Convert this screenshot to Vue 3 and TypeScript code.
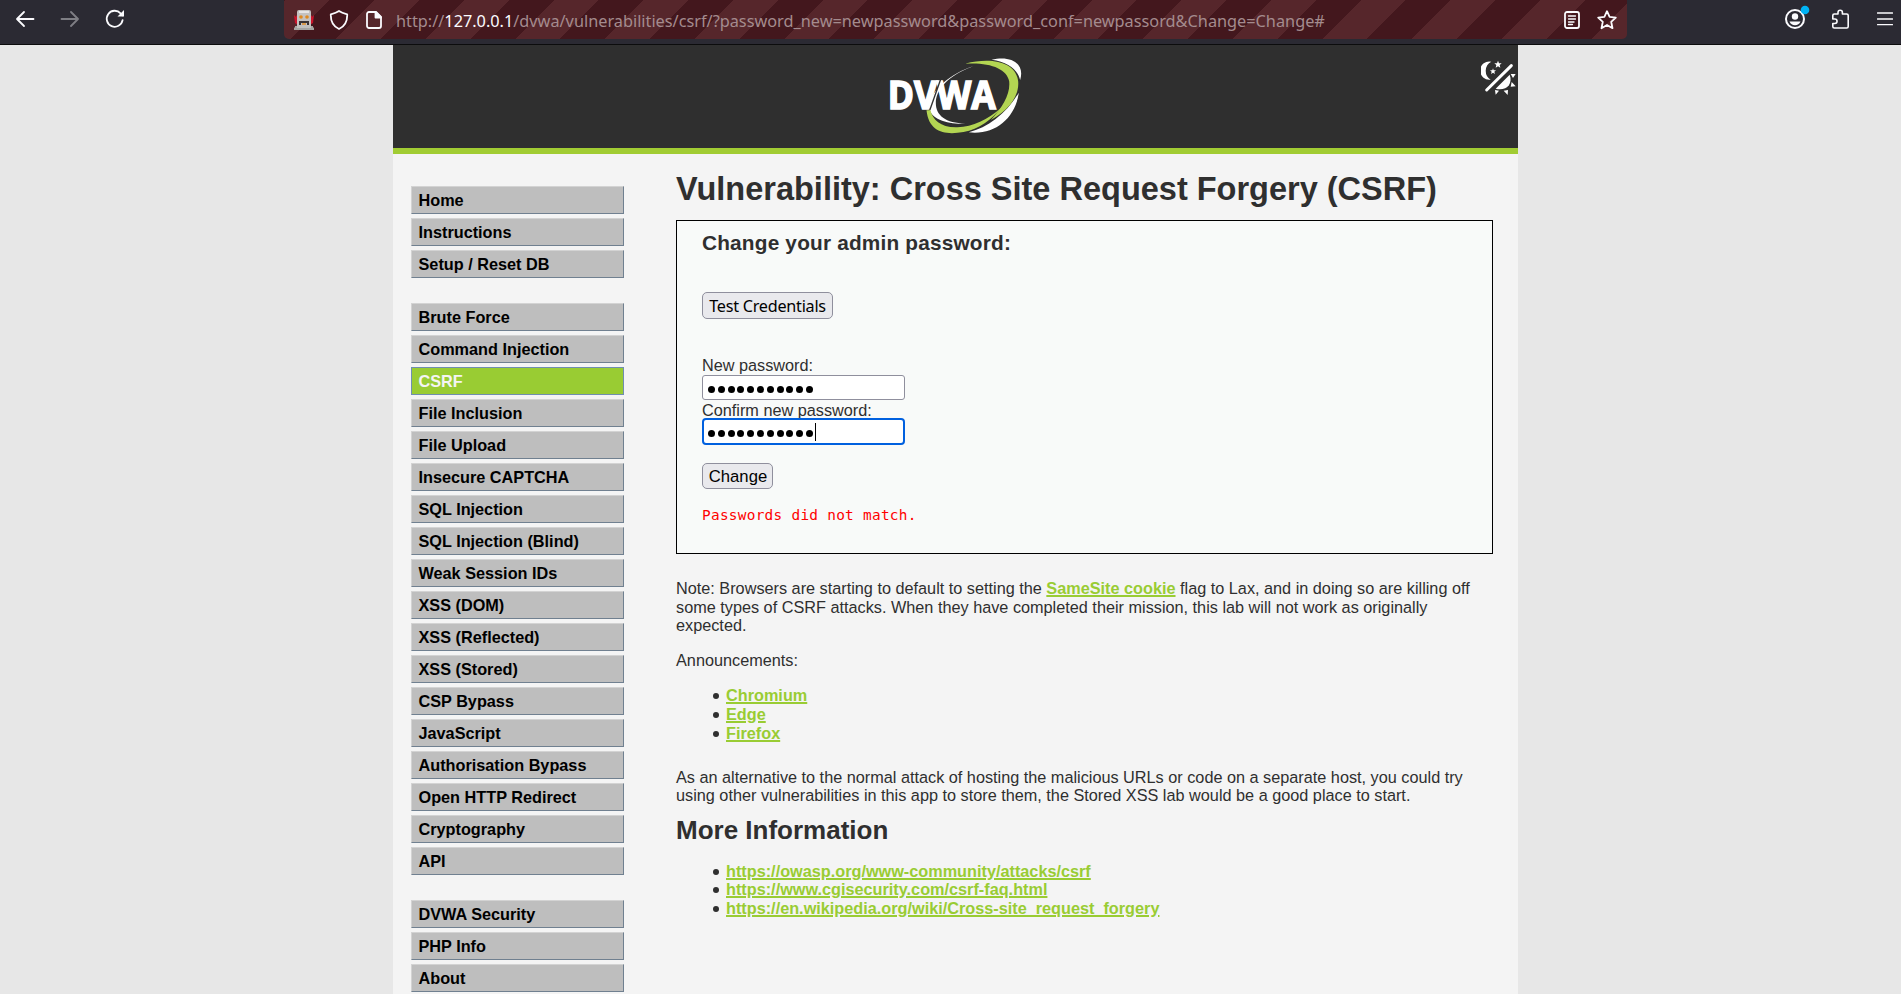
<script setup lang="ts">
interface NavGroup { items: string[] }

const groups: NavGroup[] = [
  { items: ['Home', 'Instructions', 'Setup / Reset DB'] },
  {
    items: [
      'Brute Force', 'Command Injection', 'CSRF', 'File Inclusion', 'File Upload',
      'Insecure CAPTCHA', 'SQL Injection', 'SQL Injection (Blind)', 'Weak Session IDs',
      'XSS (DOM)', 'XSS (Reflected)', 'XSS (Stored)', 'CSP Bypass', 'JavaScript',
      'Authorisation Bypass', 'Open HTTP Redirect', 'Cryptography', 'API',
    ],
  },
  { items: ['DVWA Security', 'PHP Info', 'About'] },
]
const current = 'CSRF'
const announcements: string[] = ['Chromium', 'Edge', 'Firefox']
const references: string[] = [
  'https://owasp.org/www-community/attacks/csrf',
  'https://www.cgisecurity.com/csrf-faq.html',
  'https://en.wikipedia.org/wiki/Cross-site_request_forgery',
]
const passwordLength = 11
</script>

<template>
  <div class="screen">
    <header class="toolbar">
      <div class="nav-buttons">
        <svg width="20" height="20" viewBox="0 0 20 20" class="line"><path d="M18.5 10H2.5M9 3 2 10l7 7" /></svg>
        <svg width="20" height="20" viewBox="0 0 20 20" class="line dim"><path d="M1.5 10h16M11 3l7 7-7 7" /></svg>
        <svg width="20" height="20" viewBox="0 0 20 20" class="line">
          <path d="M17.6 11.2a8 8 0 1 1-2-6.9l2 2" /><path d="M19 1v6.5h-6.500z" fill="#fbfbfe" stroke="none" />
        </svg>
      </div>
      <div class="urlbar">
        <svg class="robot" width="20" height="20" viewBox="0 0 20 20">
          <path d="M0 5l2 2v-2l2 3v7l-3-2zM20 5l-2 2v-2l-2 3v7l3-2z" fill="#c9142b" />
          <path d="M3 2q0-2 2-2h10q2 0 2 2v14H3z" fill="#c4c2c0" />
          <path d="M5 1h10v2H5z" fill="#e6e5e4" />
          <circle cx="7" cy="7" r="1.800" fill="#e08a1e" /><circle cx="13" cy="7" r="1.800" fill="#e08a1e" />
          <path d="M5 11h10v4h-2v-2H7v2H5z" fill="#3a3434" /><path d="M8 13h4v2H8z" fill="#d89a4a" />
          <path d="M1 16h18v1.500h1V20H0v-2.500h1z" fill="#a5a5a2" /><path d="M3 16.500h14v1H3z" fill="#dcdcd8" />
        </svg>
        <svg class="line shield" width="20" height="20" viewBox="0 0 20 20"><path d="M10 1c2.500 1.800 5 2.500 8.200 3.300C18.400 10 16.500 16 10 19 3.500 16 1.600 10 1.800 4.300 5 3.500 7.500 2.800 10 1z" /></svg>
        <svg class="line doc" width="16" height="18" viewBox="0 0 16 18"><path d="M3 1h7l5 5v9a2 2 0 0 1-2 2H3a2 2 0 0 1-2-2V3a2 2 0 0 1 2-2z" /><path d="M9.500 1v5.500H15z" fill="#fbfbfe" /></svg>
        <span class="url">http://<b>127.0.0.1</b>/dvwa/vulnerabilities/csrf/?password_new=newpassword&amp;password_conf=newpassord&amp;Change=Change#</span>
        <svg class="line reader" width="16" height="18" viewBox="0 0 16 18"><rect x="1" y="1" width="14" height="16" rx="2" /><path d="M4.500 5h7M4.500 8h7M4.500 11h5.500M4.500 13.500h4" stroke-width="1.300" /></svg>
        <svg class="line star" width="20" height="20" viewBox="0 0 20 20"><path d="M10 1.200l2.600 5.700 6.200.7-4.600 4.200 1.300 6.400-5.500-3.200-5.500 3.200 1.300-6.400L1.200 7.600l6.200-.7z" /></svg>
      </div>
      <div class="tools">
        <svg width="26" height="26" viewBox="0 0 26 26">
          <circle cx="11" cy="15" r="9" fill="none" stroke="#fbfbfe" stroke-width="2" />
          <circle cx="11" cy="12.500" r="3.200" fill="#fbfbfe" /><path d="M5.500 17.500h11c-1 2.500-3 3.700-5.500 3.700s-4.500-1.200-5.500-3.700z" fill="#fbfbfe" />
          <circle cx="21" cy="6" r="4.300" fill="#00b3f4" />
        </svg>
        <svg class="line puzzle" width="20" height="20" viewBox="0 0 20 20"><path d="M1.800 6.500q0-1.500 1.500-1.500H7V3.500a2.200 2.200 0 0 1 4.400 0V5h4.300q1.500 0 1.500 1.500v11q0 1.500-1.500 1.500H3.300q-1.500 0-1.500-1.500v-3h2a2 2 0 0 0 0-4.500h-2z" stroke-width="1.600" /></svg>
        <svg class="line menu" width="16" height="14" viewBox="0 0 16 14"><path d="M.5 1h15M.5 7h15M.5 12.700h15" stroke-width="1.300" /></svg>
      </div>
    </header>

    <div class="container">
      <div class="banner">
        <svg width="140" height="80" viewBox="76.500 45 420 240">
          <path d="M396 59C455 45 497 70 482 120C474 88 446 66 396 59Z" fill="#fff" />
          <path d="M478 158C467 236 405 286 328 277C385 262 440 222 478 158Z" fill="#fff" />
          <path d="M342 79C275 98 208 155 209 203C212 238 268 254 318 251C258 250 229 226 229 190C229 150 262 108 342 79Z" fill="#fff" />
          <path d="M317 71C400 50 470 68 476 124C480 168 447 212 394 240C430 200 453 162 449 124C443 86 390 66 317 71Z" fill="#b3d552" />
          <path d="M201 211C208 278 258 286 312 276C358 268 398 238 425 203C385 238 340 260 294 262C245 264 219 240 213 211Z" fill="#b3d552" />
          <text x="85" y="208" textLength="324" lengthAdjust="spacingAndGlyphs" class="logo-text">DVWA</text>
          <path d="M243 119L211 210" stroke="#2f2f2f" stroke-width="4" />
        </svg>
        <svg class="theme" width="35" height="35" viewBox="120 60 105 105">
          <path d="M151 65A27.500 27.500 0 1 0 149 119A31 31 0 0 1 151 65Z" fill="#fff" />
          <path d="M171 62l3 8h8l-6 5 2 8-7-4-7 4 2-8-6-5h8zM156 85l2 6h7l-5 4 2 7-6-4-6 4 2-7-5-4h7z" fill="#fff" />
          <path d="M137 150L211 77" stroke="#fff" stroke-width="9" stroke-linecap="round" />
          <path d="M206 104C217 133 194 154 164 146Z" fill="#fff" />
          <path d="M209 102h15l-8 12zM212 126l12 13-15 1zM188 152l13-2-1 15zM162 150l12 2-10 12z" fill="#fff" />
        </svg>
      </div>

      <div class="body">
        <nav class="menu-col">
          <ul v-for="(group, i) in groups" :key="i">
            <li v-for="item in group.items" :key="item" :class="{ selected: item === current }">{{ item }}</li>
          </ul>
        </nav>

        <main>
          <h1>Vulnerability: Cross Site Request Forgery (CSRF)</h1>
          <section class="panel">
            <h3>Change your admin password:</h3>
            <button class="test" type="button">Test Credentials</button>
            <label>New password:</label>
            <div class="field"><i v-for="n in passwordLength" :key="n" /></div>
            <label class="second">Confirm new password:</label>
            <div class="field focus"><i v-for="n in passwordLength" :key="n" /><em /></div>
            <button class="change" type="button">Change</button>
            <pre>Passwords did not match.</pre>
          </section>
          <p class="note">Note: Browsers are starting to default to setting the <a>SameSite cookie</a> flag to Lax, and in doing so are killing off<br>some types of CSRF attacks. When they have completed their mission, this lab will not work as originally<br>expected.</p>
          <p class="ann">Announcements:</p>
          <ul class="links"><li v-for="a in announcements" :key="a"><a>{{ a }}</a></li></ul>
          <p class="alt">As an alternative to the normal attack of hosting the malicious URLs or code on a separate host, you could try<br>using other vulnerabilities in this app to store them, the Stored XSS lab would be a good place to start.</p>
          <h2>More Information</h2>
          <ul class="links refs"><li v-for="r in references" :key="r"><a>{{ r }}</a></li></ul>
        </main>
      </div>
    </div>
  </div>
</template>

<style>
body { margin: 0; overflow: hidden; }
</style>

<style scoped>
* { box-sizing: border-box; }
.screen { width: 1901px; height: 994px; overflow: hidden; background: #e7e7e7; font-family: "Liberation Sans", Arial, sans-serif; font-size: 16.25px; line-height: 18.75px; color: #2f2f2f; white-space: nowrap; }
.toolbar { height: 45px; background: #2b2a33; border-bottom: 1px solid #0c0c0d; display: flex; align-items: flex-start; }
svg { display: block; flex: none; }
.line { fill: none; stroke: #fbfbfe; stroke-width: 1.8; stroke-linecap: round; stroke-linejoin: round; }
.dim { opacity: .4; }
.nav-buttons { width: 284px; display: flex; gap: 25px; padding: 9px 0 0 15px; }
.urlbar { width: 1343px; height: 39px; border-radius: 0 0 5px 5px; display: flex; align-items: center; padding-left: 10px; background: repeating-linear-gradient(135deg, #43171d 0, #43171d .8px, #56262b .8px, #56262b 32.5px, #43171d 32.5px, #43171d 63.4px); }
.shield { margin-left: 15px; }
.doc { margin-left: 17px; }
.url { margin-left: 14px; width: 1168px; margin-top: 2px; font: 16.300px/24px "Noto Sans", "Open Sans", sans-serif; color: #a48b8e; }
.url b { font-weight: 400; color: #fbfbfe; }
.star { margin-left: 17px; }
.tools { display: flex; padding: 4px 0 0 157px; }
.puzzle { margin: 5px 0 0 21px; }
.menu { margin: 8px 0 0 26px; }

.container { width: 1125px; margin: 0 auto 0 393px; background: #f4f4f4; height: 949px; }
.banner { height: 109px; background: #2f2f2f; border-bottom: 6px solid #a1cc33; display: flex; padding: 10px 0 0 491.500px; }
.logo-text { font: 700 120px "Open Sans", sans-serif; fill: #fff; stroke: #fff; stroke-width: 5px; }
.theme { margin: 5px 0 0 456.500px; }
.body { display: flex; }
.menu-col { width: 213px; margin: 32px 52px 0 18px; }
ul { list-style: none; margin: 0; padding: 0; }
.menu-col ul { display: flex; flex-direction: column; gap: 4px; margin-bottom: 25px; }
.menu-col li { height: 28px; padding-left: 6.500px; line-height: 26px; font-weight: 700; color: #000; background: #bebebe; border: 1px solid; border-color: #d3d3d3 #708090 #708090 #d3d3d3; }
.menu-col li.selected { background: #9c3; color: #f4f4f4; border-color: #708eb0; }

main { width: 817px; }
h1 { margin: 16px 0 0; font-size: 32.500px; line-height: 38px; height: 50px; }
.panel { height: 334px; background: #f8faf9; border: 1px solid #000; padding: 10px 25px 0; }
h3 { margin: 0; font-size: 20.800px; line-height: 24px; letter-spacing: .19px; height: 61px; }
button { display: block; padding: 0; margin: 0; border: 1px solid #8f8f9d; border-radius: 5px; background: #e9e9ed; color: #000; font-size: 16.670px; text-align: center; }
.test { width: 131px; height: 27px; font-family: "Noto Sans", sans-serif; font-size: 16.200px; letter-spacing: -.25px; line-height: 27px; }
.change { width: 71px; height: 26px; margin-top: 18px; padding-left: 1px; font-family: "Liberation Sans", Arial, sans-serif; line-height: 25px; }
label { display: block; margin-top: 37px; height: 19px; }
label.second { margin-top: 1px; height: 17px; overflow: hidden; }
.field { width: 203px; height: 25px; background: #fff; border: 1px solid #8f8f9d; border-radius: 3px; display: flex; align-items: center; gap: 2.800px; padding: 4px 0 0 5px; }
.field i { width: 7px; height: 7px; border-radius: 50%; background: #000; }
.field.focus { height: 27px; border: 2px solid #0060df; border-radius: 4px; padding: 3px 0 0 4px; }
.field em { width: 1px; height: 18px; background: #000; margin: -2px 0 0 -1px; }
pre { margin: 17px 0 0; font: 14.400px/19px "DejaVu Sans Mono", monospace; letter-spacing: .28px; color: #f00; }
p { margin: 0; }
.note { margin-top: 25px; line-height: 18.600px; }
a { color: #9c3; font-weight: 700; text-decoration: underline; text-decoration-thickness: 2px; text-underline-offset: 1px; }
.ann { margin-top: 16px; }
.links { margin-top: 16px; padding-left: 37px; line-height: 19px; }
.links li { display: flex; align-items: center; gap: 7px; }
.links li::before { content: ""; width: 6px; height: 6px; margin-top: 1px; border-radius: 50%; background: #2f2f2f; }
.alt { margin-top: 25.500px; line-height: 18.400px; }
h2 { margin: 10px 0 0; font-size: 26px; line-height: 30px; }
.refs { margin-top: 17px; line-height: 18.500px; }
</style>
